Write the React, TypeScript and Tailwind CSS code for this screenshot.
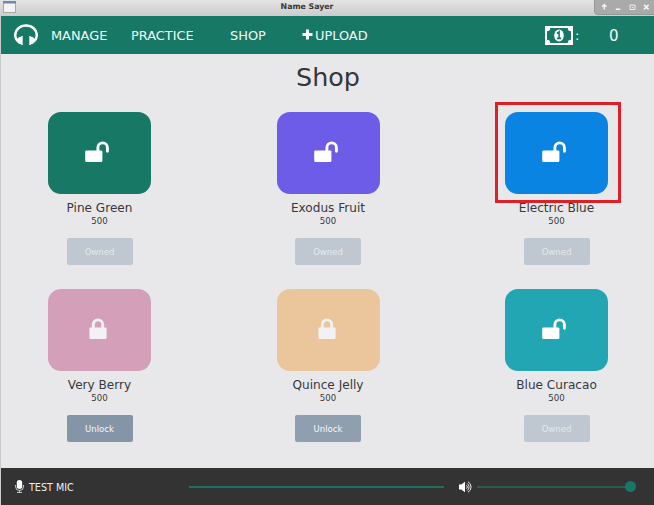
import React from "react";

type Item = { name: string; owned: boolean; card: string; button: string; highlight?: boolean };

const items: Item[] = [
  { name: "Pine Green", owned: true, card: "bg-[#177866]", button: "bg-[#bfc8d0]" },
  { name: "Exodus Fruit", owned: true, card: "bg-[#6c5ce7]", button: "bg-[#bfc8d0]" },
  { name: "Electric Blue", owned: true, card: "bg-[#0a84e3]", button: "bg-[#bfc8d0]", highlight: true },
  { name: "Very Berry", owned: false, card: "bg-[#d4a0b9]", button: "bg-[#8495a8]" },
  { name: "Quince Jelly", owned: false, card: "bg-[#ebc59b]", button: "bg-[#909fb0]" },
  { name: "Blue Curacao", owned: true, card: "bg-[#23a6b3]", button: "bg-[#bfc8d0]" },
];

function UnlockIcon() {
  return (
    <svg width="25" height="22" viewBox="0 0 25 22" className="block">
      <rect x="0.2" y="9.4" width="17.2" height="11.6" rx="1.2" fill="#fff" />
      <path d="M12.9 10V6.6a4.75 4.75 0 0 1 9.5 0v3.7" fill="none" stroke="#fff" strokeWidth="2.9" strokeLinecap="round" />
    </svg>
  );
}

function LockIcon() {
  return (
    <svg width="18" height="22" viewBox="0 0 18 22" className="block">
      <rect x="0.4" y="9.4" width="17.2" height="11.6" rx="1.2" fill="#f3f1f3" />
      <path d="M4.3 10V6.6a4.7 4.7 0 0 1 9.4 0V10" fill="none" stroke="#f3f1f3" strokeWidth="2.9" />
    </svg>
  );
}

function ShopItem({ item }: { item: Item }) {
  return (
    <div className="flex h-[177px] flex-col items-center">
      <div className={`relative flex h-[82px] w-full shrink-0 rounded-[13px] ${item.card}`}>
        <div className={item.owned ? "pl-[37px] pt-[29px]" : "pl-[41px] pt-[29px]"}>
          {item.owned ? <UnlockIcon /> : <LockIcon />}
        </div>
        {item.highlight && (
          <div className="absolute -left-[10px] -top-[10px] h-[101px] w-[126px] border-[3px] border-[#db2027]" />
        )}
      </div>
      <div className="mt-[6px] h-4 whitespace-nowrap text-[12.1px] leading-4 text-[#38383a]">{item.name}</div>
      <div className="h-[10px] text-[8.6px] leading-[10px] text-[#38383a]">500</div>
      <button
        className={`mt-[12px] h-[27px] w-[66px] shrink-0 rounded-[2px] text-[8.5px] leading-[28px] ${item.button} ${
          item.owned ? "text-[#e5e9ed]" : "text-[#f5f7f9]"
        }`}
      >
        {item.owned ? "Owned" : "Unlock"}
      </button>
    </div>
  );
}

function TitleBar() {
  return (
    <div className="flex h-4 items-start bg-linear-to-b from-[#e2e3e2] to-[#cccccc]">
      <svg width="20" height="14" viewBox="0 0 20 14" className="shrink-0">
        <rect x="3.5" y="1.5" width="12" height="11" fill="#f3f3f1" stroke="#aaa9a5" />
        <rect x="3" y="1" width="13" height="2.5" fill="#6f88b5" />
      </svg>
      <div className="flex-1 text-center text-[7.8px] font-bold leading-[14px] text-[#363636]">Name Sayer</div>
      <svg width="60" height="15" viewBox="0 0 60 15" className="shrink-0">
        <path d="M.5 0H60v14.5H4Q.5 14.5.5 11z" fill="#aaa" />
        <path d="M.5 0v11Q.5 14.5 4 14.5H60" fill="none" stroke="#989898" />
        <path d="M10.3 9.5V5M8.2 6.8l2.1-2.2 2.1 2.2M21.8 9.2h4.4" fill="none" stroke="#f7f7f7" strokeWidth="1.4" />
        <path d="M36 5h5v4.5h-5zM37.7 7.4h1.8" fill="none" stroke="#eee" strokeWidth="1" />
        <path d="m50 4.8 4.6 4.6m0-4.6L50 9.4" stroke="#f7f7f7" strokeWidth="1.5" />
      </svg>
    </div>
  );
}

function NavBar() {
  return (
    <nav className="flex h-[38px] items-center bg-[#177866] pl-[13px] text-[12.9px] leading-[38px] text-[#f2faf8]">
      <svg width="24" height="22" viewBox="0 0 24 22" className="-mt-[1px] shrink-0">
        <path d="M3.4 17C1.8 14.8 1.2 13.2 1.2 11.2 1.2 5.6 6 1.6 12 1.6s10.8 4 10.8 9.6c0 2-.6 3.6-2.2 5.8" fill="none" stroke="#fff" strokeWidth="2.5" />
        <path d="M8.7 12v9H7.2v-.8C4.4 20.1 2.9 18.4 2.9 16.4s1.5-3.6 4.3-3.7V12zM15.3 12v9h1.5v-.8c2.8-.1 4.3-1.8 4.3-3.8s-1.5-3.6-4.3-3.7V12z" fill="#fff" />
      </svg>
      <span className="ml-[13px] w-[80px] pt-[2px]">MANAGE</span>
      <span className="w-[99px] pt-[2px]">PRACTICE</span>
      <span className="w-[72px] pt-[2px]">SHOP</span>
      <svg width="11" height="11" viewBox="0 0 11 11" className="-mt-[1px] shrink-0">
        <path d="M5.5.5v10M.5 5.5h10" stroke="#fff" strokeWidth="3" />
      </svg>
      <span className="ml-[2px] w-[60px] pt-[2px]">UPLOAD</span>
      <svg width="28" height="19" viewBox="0 0 28 19" className="ml-auto shrink-0">
        <rect width="28" height="19" fill="#fff" />
        <path d="M5.2 2h17.6a3.2 3.2 0 0 0 3.2 3.2v8.6a3.2 3.2 0 0 0-3.2 3.2H5.2A3.2 3.2 0 0 0 2 13.8V5.2A3.2 3.2 0 0 0 5.2 2z" fill="#177866" />
        <ellipse cx="14" cy="9.5" rx="4.8" ry="5.9" fill="#fff" />
        <path d="m12 7.5 2.1-1.6v6.5m-2.2 0h4.3" fill="none" stroke="#177866" strokeWidth="1.6" />
      </svg>
      <span className="ml-[2px] w-[34px] pt-[2px]">:</span>
      <span className="w-[45px] pt-[1px] text-[15px]">0</span>
    </nav>
  );
}

function FooterBar() {
  return (
    <footer className="flex h-[37px] items-center bg-[#333333] pl-[14px] text-[9.6px] leading-[37px] text-[#eeeeee]">
      <svg width="9" height="13" viewBox="0 0 9 13" className="shrink-0">
        <rect x="1.8" y="0" width="5.4" height="9" rx="2.7" fill="#fff" />
        <path d="M.5 5v1.5a4 4 0 0 0 8 0V5M4.5 10.5v2M2 12.4h5" fill="none" stroke="#ddd" strokeWidth="0.9" />
      </svg>
      <span className="ml-[5px] w-[160px] pt-[1px]">TEST MIC</span>
      <div className="h-[2px] w-[255px] bg-[#216f5f]" />
      <svg width="13" height="12" viewBox="0 0 13 12" className="ml-[15px] shrink-0">
        <path d="M0 3.6h2.3L6 .8v10.4L2.3 8.4H0z" fill="#fff" />
        <path d="M7.4 4.3a2.2 2.2 0 0 1 0 3.4M8.2 2.5a4.2 4.2 0 0 1 0 7M8.9.7a6 6 0 0 1 0 10.6" fill="none" stroke="#e5e5e5" strokeWidth="1" />
      </svg>
      <div className="ml-[5px] h-[2px] w-[149px] bg-[#285c50]" />
      <div className="-ml-[1px] h-[11px] w-[11px] rounded-full bg-[#177866]" />
    </footer>
  );
}

export default function App() {
  return (
    <div className="h-[505px] w-[654px] overflow-hidden bg-[#e8e8ea] font-['DejaVu_Sans',sans-serif]">
      <TitleBar />
      <div className="border-l border-[#c9cccb]">
        <NavBar />
        <main className="h-[414px] pl-[47px]">
          <h1 className="h-[57.5px] w-[560px] pt-[5px] text-center text-[25.4px] leading-[36px] text-[#343638]">Shop</h1>
          <div className="grid grid-cols-[103px_103px_103px] gap-x-[125.5px]">
            {items.map((item) => (
              <ShopItem key={item.name} item={item} />
            ))}
          </div>
        </main>
        <FooterBar />
      </div>
    </div>
  );
}
